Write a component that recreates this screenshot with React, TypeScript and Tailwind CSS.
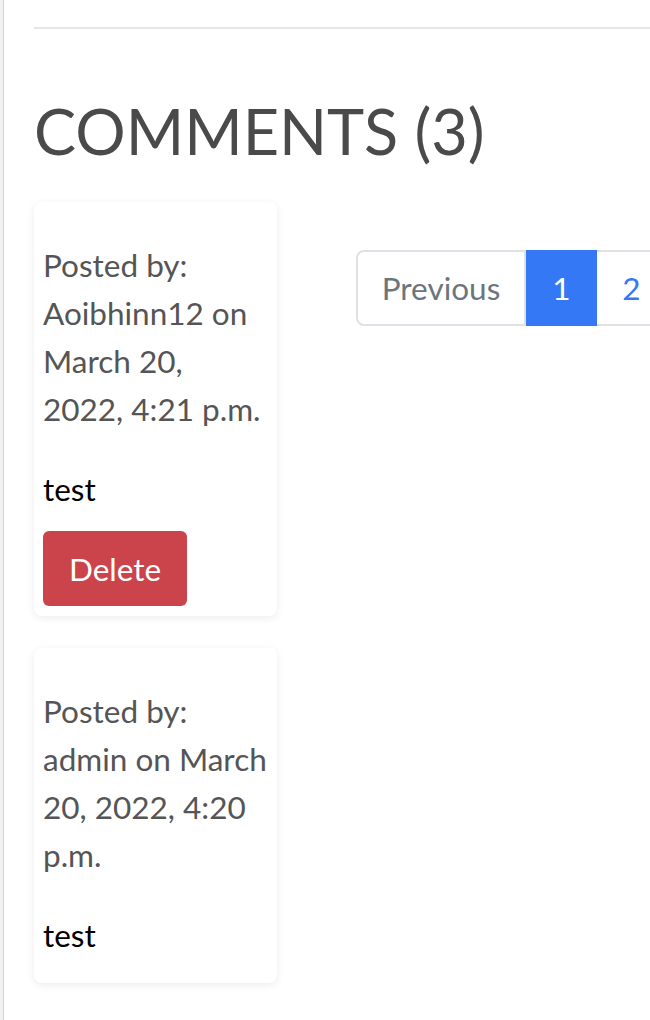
const comments = [
  {
    author: "Aoibhinn12",
    date: "March 20, 2022, 4:21 p.m.",
    body: "test",
    canDelete: true,
  },
  {
    author: "admin",
    date: "March 20, 2022, 4:20 p.m.",
    body: "test",
    canDelete: false,
  },
];

function CommentCard({ author, date, body, canDelete }: (typeof comments)[number]) {
  return (
    <div className="w-[243px] rounded-lg bg-white px-[9px] pt-[39px] pb-2 shadow-[0_2px_8px_rgba(0,0,0,0.08)]">
      <p className="text-[#555555]">
        Posted by: {author} on {date}
      </p>
      <p className="mt-8 mb-4 text-black">{body}</p>
      {canDelete && (
        <button className="my-[2px] h-[75px] rounded-md bg-[#cc444b] px-[26px] text-white">
          Delete
        </button>
      )}
    </div>
  );
}

export default function App() {
  return (
    <div className="flex min-h-[1020px] bg-white font-['Lato',sans-serif] text-[31.5px] leading-[48px]">
      <div className="w-[4px] shrink-0 border-r border-[#d4d4d4] bg-[#f1f1f1]" />
      <div className="flex-1 overflow-hidden pl-[30px]">
        <hr className="mt-[27px] border-t-2 border-[#e6e6e6]" />
        <h2 className="mt-[62px] text-[63px] leading-[80px] font-normal text-[#4a4a4a]">
          COMMENTS (3)
        </h2>
        <div className="mt-[31px] flex gap-[79px]">
          <div className="flex flex-col gap-8">
            {comments.map((c) => (
              <CommentCard key={c.author} {...c} />
            ))}
          </div>
          <nav className="mt-[48px] self-start">
            <ul className="flex">
              <li className="flex h-[76px] w-[170px] items-center justify-center rounded-l-lg border-2 border-[#dee2e6] text-[#6c757d]">
                Previous
              </li>
              <li className="flex h-[76px] w-[71px] items-center justify-center bg-[#3478f6] text-white">
                1
              </li>
              <li className="flex h-[76px] w-[71px] items-center justify-center border-2 border-l-0 border-[#dee2e6] text-[#3478f6]">
                2
              </li>
            </ul>
          </nav>
        </div>
      </div>
    </div>
  );
}
